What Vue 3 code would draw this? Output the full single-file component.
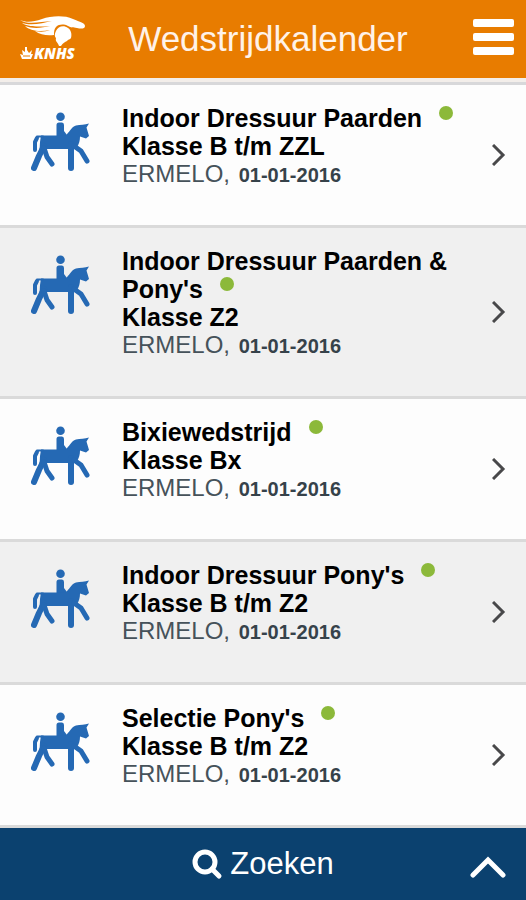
<script setup>
const events = [
  { title: 'Indoor Dressuur Paarden', level: 'Klasse B t/m ZZL', place: 'ERMELO', date: '01-01-2016' },
  { title: "Indoor Dressuur Paarden & Pony's", level: 'Klasse Z2', place: 'ERMELO', date: '01-01-2016' },
  { title: 'Bixiewedstrijd', level: 'Klasse Bx', place: 'ERMELO', date: '01-01-2016' },
  { title: "Indoor Dressuur Pony's", level: 'Klasse B t/m Z2', place: 'ERMELO', date: '01-01-2016' },
  { title: "Selectie Pony's", level: 'Klasse B t/m Z2', place: 'ERMELO', date: '01-01-2016' },
]
</script>

<template>
  <div class="app">
    <header class="header">
      <a class="logo" href="#" aria-label="KNHS">
        <svg width="68" height="50" viewBox="0 0 68 50">
          <path fill="#fff" d="M0 6 C7 9 13 8 22 5 C31 2 44 1 53 5 C60 8 65 9 65 12 C65 15 61 15 57 14 C53 13 51 14 48 12 C44 10 39 10 36 13 C34 15 34 18 34 21 C28 22 20 21 15 17 C20 18 25 18 30 16 C20 18 10 17 5 12 C13 15 22 14 30 12 C19 13 8 13 2 9 C12 12 23 9 32 7 C20 8 7 11 0 6 Z" />
          <path fill="#fff" d="M36 17 C38 12 44 11 48 14 C51 16 52 20 51 24 C50 26 48 25 47 27 C45 28 43 29 41 32 L39 32 C38 28 35 28 36 24 C34 22 35 19 36 17 Z" />
          <path fill="#fff" d="M5 33 H7 V36 L9 39 L12 36 L11 40 L13 40 L11 45 H2 L0 40 L3 41 L2 36 L5 38 Z" />
          <path fill="none" stroke="#e87c00" stroke-width="1" d="M3 42 H10" />
          <text class="logo-text" x="14" y="45">KNHS</text>
        </svg>
      </a>
      <h1 class="heading">Wedstrijdkalender</h1>
      <button class="menu" type="button" aria-label="Menu">
        <span class="bar"></span>
        <span class="bar"></span>
        <span class="bar"></span>
      </button>
    </header>

    <main class="list">
      <a v-for="(event, i) in events" :key="i" class="row" href="#">
        <svg class="horse" width="60" height="60" viewBox="0 0 60 60" aria-hidden="true">
          <g fill="#2569b4">
            <circle cx="29.5" cy="4.8" r="4.3" />
            <path d="M28 10.5 H31 Q33 10.5 33 13 V19 L36 23 L34 25 H25.5 V13 Q25.5 10.5 28 10.5 Z" />
            <path d="M10 23.5 H34.5 C38 21 40 15 45 13.5 C49 12.5 54 13 58 11.5 L55.5 15.5 L58 24 L55 26.5 L49 24.5 C49 29 48 32 46 35 L43 37 H14 L8 41 Q9 34 9 30 Z" />
          </g>
          <g fill="none" stroke="#2569b4" stroke-linecap="round" stroke-linejoin="round">
            <path stroke-width="2" d="M12 24.5 H6" />
            <path stroke-width="4" d="M6 26 L4 30 V38" />
            <path stroke-width="6" d="M13 34 L8 44 L3 56" />
            <path stroke-width="5" d="M13 36 L16 45 L21 52" />
            <path stroke-width="6" d="M40 32 V56" />
            <path stroke-width="5" d="M43 34 L50 39 L56 49" />
          </g>
        </svg>
        <div class="info">
          <div class="title">{{ event.title }}<span class="dot"></span></div>
          <div class="title">{{ event.level }}</div>
          <div class="place">{{ event.place }}, <span class="date">{{ event.date }}</span></div>
        </div>
        <svg class="chevron" width="14" height="22" viewBox="0 0 14 22" aria-hidden="true">
          <path fill="none" stroke="#48484a" stroke-width="3" d="M1 1 L11 11 L1 21" />
        </svg>
      </a>
    </main>

    <button class="search" type="button">
      <span class="search-label">
        <svg width="31" height="31" viewBox="0 0 31 31" aria-hidden="true">
          <circle cx="13" cy="13" r="10" fill="none" stroke="#fff" stroke-width="5" />
          <path d="M20 20 L27 27" stroke="#fff" stroke-width="5" stroke-linecap="round" />
        </svg>
        Zoeken
      </span>
      <svg class="up" width="36" height="22" viewBox="0 0 36 22" aria-hidden="true">
        <path fill="none" stroke="#fff" stroke-width="5" stroke-linecap="round" d="M3 19 L18 4 L33 19" />
      </svg>
    </button>
  </div>
</template>

<style>
body {
  margin: 0;
}
</style>

<style scoped>
.app {
  display: flex;
  flex-direction: column;
  min-height: 100vh;
  background: #fdfdfd;
  font-family: "Liberation Sans", Arial, sans-serif;
}

.header {
  display: grid;
  grid-template-columns: 84px 1fr 82px;
  align-items: center;
  height: 78px;
  padding: 0 12px 0 20px;
  box-sizing: border-box;
  background: #e87c00;
}

.logo svg {
  display: block;
}

.logo-text {
  fill: #fff;
  font: italic 800 15px "Open Sans", sans-serif;
}

.heading {
  margin: 0;
  color: #fff2e8;
  font-size: 35px;
  font-weight: 400;
  line-height: 40px;
  text-align: center;
}

.menu {
  display: flex;
  flex-direction: column;
  gap: 6px;
  justify-self: end;
  width: 41px;
  padding: 0 0 4px;
  border: 0;
  background: none;
}

.bar {
  height: 8px;
  border-radius: 2px;
  background: #fff;
}

.list {
  flex: 1;
  border-top: 3px solid #d8d8da;
  box-shadow: 0 -4px #f3eeea;
  margin-top: 4px;
}

.row {
  display: flex;
  align-items: center;
  padding: 0 20px 0 31px;
  border-bottom: 3px solid #dadada;
  color: #000;
  text-decoration: none;
}

.row:nth-child(even) {
  background: #f0f0f0;
}

.horse {
  flex: none;
  align-self: flex-start;
  margin-top: 27px;
}

.info {
  flex: 1;
  padding: 19px 24px 37px 31px;
}

.title {
  font-size: 25px;
  font-weight: 700;
  line-height: 28px;
}

.dot {
  display: inline-block;
  width: 14px;
  height: 14px;
  margin-left: 17px;
  border-radius: 50%;
  background: #8cb93a;
  vertical-align: 7px;
}

.place {
  color: #46525a;
  font-size: 24px;
  line-height: 28px;
}

.date {
  margin-left: 2px;
  color: #36424a;
  font-size: 20px;
  font-weight: 700;
  line-height: 20px;
}

.chevron {
  flex: none;
}

.search {
  position: sticky;
  bottom: 0;
  display: grid;
  grid-template-columns: 1fr auto 1fr;
  align-items: center;
  height: 72px;
  padding: 0 20px;
  border: 0;
  background: #0b416f;
  color: #fff;
  font-family: inherit;
  font-size: 31px;
}

.search-label {
  grid-column: 2;
  display: flex;
  align-items: center;
  gap: 7px;
}

.up {
  justify-self: end;
  padding-top: 6px;
}
</style>
